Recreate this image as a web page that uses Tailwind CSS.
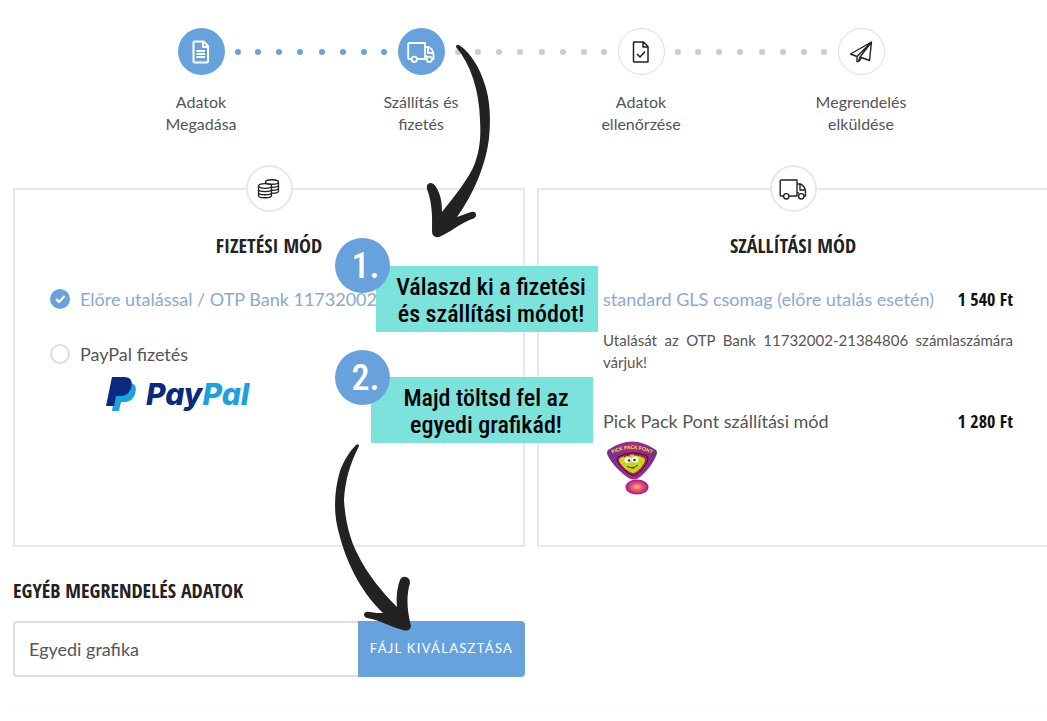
<!DOCTYPE html>
<html lang="hu">
<head>
    <meta charset="UTF-8">
    <meta name="viewport" content="width=device-width, initial-scale=1.0">
    <title>Szállítás és fizetés</title>
    <script src="https://cdn.jsdelivr.net/npm/@tailwindcss/browser@4"></script>
</head>

<body class="bg-white font-['Lato',sans-serif] text-[#555] overflow-x-hidden">

<main class="relative pl-[13px] -mr-0.5 pt-7">

    <!-- Steps -->
    <ol class="grid grid-cols-4 max-w-[880px] mx-auto text-center text-base leading-[22px]">
        <li>
            <div class="flex items-center">
                <div class="flex-1 px-[9px]"></div>
                <div class="size-[47px] rounded-full bg-[#68a2dc] text-white grid place-items-center">
                    <svg class="w-5 h-6" viewBox="0 0 20 24" fill="none" stroke="currentColor" stroke-width="2" stroke-linejoin="round"><path d="M3.500 1.500h9l4.500 4.500v15.500a1 1 0 0 1-1 1H3.500a1 1 0 0 1-1-1v-19a1 1 0 0 1 1-1zM12 2v5h5M5.500 11h8.500M5.500 14h8.500M5.500 17h8.500"/></svg>
                </div>
                <div class="flex-1 flex justify-between pl-2.5 pr-2">
                    <i class="size-1.5 rounded-full bg-[#68a2dc]"></i><i class="size-1.5 rounded-full bg-[#68a2dc]"></i><i class="size-1.5 rounded-full bg-[#68a2dc]"></i><i class="size-1.5 rounded-full bg-[#68a2dc]"></i>
                </div>
            </div>
            <p class="mt-4">Adatok<br>Megadása</p>
        </li>
        <li>
            <div class="flex items-center">
                <div class="flex-1 flex justify-between pl-2 pr-2.5">
                    <i class="size-1.5 rounded-full bg-[#68a2dc]"></i><i class="size-1.5 rounded-full bg-[#68a2dc]"></i><i class="size-1.5 rounded-full bg-[#68a2dc]"></i><i class="size-1.5 rounded-full bg-[#68a2dc]"></i>
                </div>
                <div class="size-[47px] rounded-full bg-[#68a2dc] text-white grid place-items-center">
                    <svg class="w-7 h-6" viewBox="0 0 28 24" fill="none" stroke="currentColor" stroke-width="1.8" stroke-linejoin="round"><path d="M4.500 19H2.200a1 1 0 0 1-1-1V4a1 1 0 0 1 1-1H18v16H10M18 7h3.500c2.500 1 4.500 4 5 7v5h-1.500M21 7.500V13h5M18 16h2"/><circle cx="7.300" cy="19.300" r="2.700"/><circle cx="22.300" cy="19.300" r="2.700"/></svg>
                </div>
                <div class="flex-1 flex justify-between pl-2.5 pr-2">
                    <i class="size-1.5 rounded-full bg-[#ccc]"></i><i class="size-1.5 rounded-full bg-[#ccc]"></i><i class="size-1.5 rounded-full bg-[#ccc]"></i><i class="size-1.5 rounded-full bg-[#ccc]"></i>
                </div>
            </div>
            <p class="mt-4">Szállítás és<br>fizetés</p>
        </li>
        <li>
            <div class="flex items-center">
                <div class="flex-1 flex justify-between pl-2 pr-2.5">
                    <i class="size-1.5 rounded-full bg-[#ccc]"></i><i class="size-1.5 rounded-full bg-[#ccc]"></i><i class="size-1.5 rounded-full bg-[#ccc]"></i><i class="size-1.5 rounded-full bg-[#ccc]"></i>
                </div>
                <div class="size-[47px] rounded-full border border-[#ddd] text-[#222] grid place-items-center">
                    <svg class="w-5 h-6" viewBox="0 0 20 24" fill="none" stroke="currentColor" stroke-width="1.500" stroke-linejoin="round"><path d="M3 2h9.500l4.500 4.500V22H3a.5.5 0 0 1-.5-.5v-19A.5.5 0 0 1 3 2zM12 2.500V7h4.500M6 14l3 3 5-5.500"/></svg>
                </div>
                <div class="flex-1 flex justify-between pl-2.5 pr-2">
                    <i class="size-1.5 rounded-full bg-[#ccc]"></i><i class="size-1.5 rounded-full bg-[#ccc]"></i><i class="size-1.5 rounded-full bg-[#ccc]"></i><i class="size-1.5 rounded-full bg-[#ccc]"></i>
                </div>
            </div>
            <p class="mt-4">Adatok<br>ellenőrzése</p>
        </li>
        <li>
            <div class="flex items-center">
                <div class="flex-1 flex justify-between pl-2 pr-2.5">
                    <i class="size-1.5 rounded-full bg-[#ccc]"></i><i class="size-1.5 rounded-full bg-[#ccc]"></i><i class="size-1.5 rounded-full bg-[#ccc]"></i><i class="size-1.5 rounded-full bg-[#ccc]"></i>
                </div>
                <div class="size-[47px] rounded-full border border-[#ddd] text-[#222] grid place-items-center">
                    <svg class="size-6" viewBox="0 0 24 24" fill="none" stroke="currentColor" stroke-width="1.400" stroke-linejoin="round"><path d="M22.500 2 1.500 14l6.500 2.500zM22.500 2l-2 18.500-9.500-3.500zM8 16.500v5h1.500L11 17M9.500 21.500l3-3.500"/></svg>
                </div>
                <div class="flex-1 px-[9px]"></div>
            </div>
            <p class="mt-4">Megrendelés<br>elküldése</p>
        </li>
    </ol>

    <!-- Payment and shipping -->
    <div class="grid grid-cols-2 gap-3 mt-[53px] text-lg leading-6">

        <section class="border-2 border-[#e8e8e8] px-[35px] pb-12">
            <div class="size-[47px] -mt-[25px] mx-auto rounded-full border-2 border-[#e8e8e8] bg-white text-[#222] grid place-items-center">
                <svg class="size-6" viewBox="0 0 24 24" fill="none" stroke="currentColor" stroke-width="1.300"><ellipse cx="8" cy="9" rx="6.500" ry="2.300"/><path d="M1.500 9v9.500c0 3 13 3 13 0V9M1.500 12.300c0 3 13 3 13 0M1.500 15.500c0 3 13 3 13 0M8.500 6.500V5c0-3 13-3 13 0v9c0 1.500-3 2.300-6.500 2.300M8.500 5c0 3 13 3 13 0M15 10.300c3.500 0 6.500-.8 6.500-2.300M15 13.300c3.500 0 6.500-.8 6.500-2.300"/></svg>
            </div>
            <h2 class="mt-[22px] text-center text-xl leading-6 font-bold text-[#222] font-['Open_Sans_Condensed','Noto_Sans_Condensed','Roboto_Condensed','Liberation_Sans_Narrow',sans-serif]">FIZETÉSI MÓD</h2>

            <label class="mt-[29px] flex items-center gap-2.5 text-[#8aa8d6] whitespace-nowrap">
                <span class="relative size-5 shrink-0">
                    <input type="radio" name="payment" checked class="block appearance-none size-5 rounded-full bg-[#68a2dc]">
                    <svg class="absolute inset-0 size-5 pointer-events-none" viewBox="0 0 20 20" fill="none" stroke="#fff" stroke-width="2"><path d="m6 10 3 3 5.500-6"/></svg>
                </span>
                Előre utalással / OTP Bank 11732002-
            </label>

            <label class="mt-[31px] flex items-center gap-2.5">
                <input type="radio" name="payment" class="appearance-none size-5 rounded-full border-2 border-[#ddd]">
                PayPal fizetés
            </label>
            <svg class="mt-2.5 ml-14 w-[146px] h-9" viewBox="0 0 146 36" role="img" aria-label="PayPal">
                <path d="M9 7h12c7 0 8 5 6 11s-6 8-11 8h-3l-2 9H4z" fill="#1ba0e0" transform="translate(2 0)"/>
                <path d="M6 1h12c7 0 9 4 7 11-2 6-6 8-11 8h-4l-2 10H0z" fill="#0a2a80"/>
                <text x="40" y="29" font-family="Inter" font-size="30" font-weight="800" font-style="italic" fill="#0a2a80">Pay<tspan fill="#1ba0e0">Pal</tspan></text>
            </svg>
        </section>

        <section class="border-2 border-[#e8e8e8] px-[34px] pb-[50px]">
            <div class="size-[47px] -mt-[25px] mx-auto rounded-full border-2 border-[#e8e8e8] bg-white text-[#222] grid place-items-center">
                <svg class="w-7 h-6" viewBox="0 0 28 24" fill="none" stroke="currentColor" stroke-width="1.400" stroke-linejoin="round"><path d="M4.500 19H2.200a1 1 0 0 1-1-1V4a1 1 0 0 1 1-1H18v16H10M18 7h3.500c2.500 1 4.500 4 5 7v5h-1.500M21 7.500V13h5M18 16h2"/><circle cx="7.300" cy="19.300" r="2.700"/><circle cx="22.300" cy="19.300" r="2.700"/></svg>
            </div>
            <h2 class="mt-[22px] text-center text-xl leading-6 font-bold text-[#222] font-['Open_Sans_Condensed','Noto_Sans_Condensed','Roboto_Condensed','Liberation_Sans_Narrow',sans-serif]">SZÁLLÍTÁSI MÓD</h2>

            <div class="mt-[29px] flex items-center justify-between">
                <label class="flex items-center gap-2.5 text-[#8aa8d6] whitespace-nowrap">
                    <input type="radio" name="shipping" checked class="appearance-none size-5 rounded-full bg-[#68a2dc]">
                    standard GLS csomag (előre utalás esetén)
                </label>
                <strong class="whitespace-nowrap text-[#111] font-['Open_Sans_Condensed','Noto_Sans_Condensed','Roboto_Condensed','Liberation_Sans_Narrow',sans-serif]">1 540 Ft</strong>
            </div>
            <p class="mt-[18px] ml-[30px] text-[15px] leading-[22px] text-justify">Utalását az OTP Bank 11732002-21384806 számlaszámára várjuk!</p>

            <div class="mt-9 flex items-center justify-between">
                <label class="flex items-center gap-2.5">
                    <input type="radio" name="shipping" class="appearance-none size-5 rounded-full border-2 border-[#ddd]">
                    Pick Pack Pont szállítási mód
                </label>
                <strong class="whitespace-nowrap text-[#111] font-['Open_Sans_Condensed','Noto_Sans_Condensed','Roboto_Condensed','Liberation_Sans_Narrow',sans-serif]">1 280 Ft</strong>
            </div>
            <svg class="mt-2 ml-[34px] w-[50px] h-[54px]" viewBox="0 0 50 54" role="img" aria-label="Pick Pack Pont">
                <defs>
                    <radialGradient id="dot"><stop offset="0" stop-color="#ffc070"/><stop offset=".4" stop-color="#f06070"/><stop offset="1" stop-color="#a81888"/></radialGradient>
                    <linearGradient id="shield"><stop offset="0" stop-color="#70308c"/><stop offset=".5" stop-color="#a52b8c"/><stop offset="1" stop-color="#70308c"/></linearGradient>
                    <path id="arc" d="M3 14Q25 2 47 14"/>
                </defs>
                <path d="M1 9Q25-8 49 9q2 2 0 6c-4 9-9 15-16 21q-6 5-13 0C12 30 5 23 1 15q-2-4 0-6z" fill="url(#shield)"/>
                <path d="M11 16Q25 8 40 15q2 2 0 6c-3 6-6 9-10 12q-4 3-7 0c-5-3-9-7-12-12q-2-3 0-5z" fill="#c2185b" stroke="#301030"/>
                <path d="M13 17q12-7 24 0 2 2 0 5c-2 4-5 7-8 9q-3 2-6 0c-4-2-7-5-10-9q-2-3 0-5z" fill="#c4d91c"/>
                <ellipse cx="21" cy="19" rx="3.500" ry="3" fill="#fff"/><ellipse cx="28" cy="18.500" rx="3.500" ry="3" fill="#fff"/>
                <circle cx="22" cy="19.500" r="1.300" fill="#234"/><circle cx="27.500" cy="19" r="1.300" fill="#234"/>
                <path d="M17 16q3-3 6-1M27 14q4-1 5 1M20 25q5 4 11-1" fill="none" stroke="#333"/>
                <path d="M24 27q3 2 4-1z" fill="#c22"/>
                <text font-family="Lato" font-size="5" font-weight="900" fill="#ffd93b" text-anchor="middle"><textPath href="#arc" startOffset="50%">PICK PACK PONT</textPath></text>
                <ellipse cx="30" cy="46" rx="11.500" ry="7.500" fill="url(#dot)"/>
            </svg>
        </section>
    </div>

    <!-- Custom artwork upload -->
    <section class="mt-8 w-1/2 pr-1.5">
        <h2 class="text-xl leading-6 font-bold text-[#222] font-['Open_Sans_Condensed','Noto_Sans_Condensed','Roboto_Condensed','Liberation_Sans_Narrow',sans-serif]">EGYÉB MEGRENDELÉS ADATOK</h2>
        <div class="mt-[18px] flex h-14">
            <input type="text" value="Egyedi grafika" aria-label="Egyedi grafika" class="flex-1 min-w-0 border-2 border-r-0 border-[#ddd] rounded-l px-3.5 text-lg">
            <button type="button" class="w-[167px] shrink-0 bg-[#68a2dc] text-white text-[13px] tracking-widest rounded-r">FÁJL KIVÁLASZTÁSA</button>
        </div>
    </section>
    <hr class="mt-[31px] border-[#f8f8f8]">

    <!-- Hint notes and arrows laid over the form -->
    <div class="absolute left-[376px] top-[266px] w-[222px] pt-2 pb-1 pl-2 bg-[#7be2dc] text-black text-center text-2xl leading-[27px] font-medium font-['Roboto_Condensed','Roboto',sans-serif]">Válaszd ki a fizetési<br>és szállítási módot!</div>
    <div class="absolute left-[335px] top-[238px] size-[55px] rounded-full bg-[#68a2dc] text-white grid place-items-center pl-1.5 text-4xl font-medium font-['Roboto_Condensed','Roboto',sans-serif]">1.</div>
    <div class="absolute left-[371px] top-[377px] w-[222px] pt-2 pb-1 pl-2 bg-[#7be2dc] text-black text-center text-2xl leading-[27px] font-medium font-['Roboto_Condensed','Roboto',sans-serif]">Majd töltsd fel az<br>egyedi grafikád!</div>
    <div class="absolute left-[335px] top-[350px] size-[55px] rounded-full bg-[#68a2dc] text-white grid place-items-center pl-1.5 text-4xl font-medium font-['Roboto_Condensed','Roboto',sans-serif]">2.</div>

    <svg class="absolute left-[420px] top-10 w-20 h-50 pointer-events-none" viewBox="420 40 80 200" fill="#222220">
        <path d="M456 47Q456 44 459 45C471 53 480 68 485 85C490 100 491 120 489 138C486 165 473 195 457 217L471 212Q476 211 476 215Q476 218 472 219C459 224 451 232 439 237Q432 238 432 231C432 220 433 205 427 189Q426 184 430 183Q434 183 436 187C441 195 442 203 442 212C453 198 469 179 475 163C480 149 481 136 480 120C479 90 471 65 456 47Z"/>
    </svg>
    <svg class="absolute left-[330px] top-[440px] w-[90px] h-50 pointer-events-none" viewBox="330 440 90 200" fill="#222220">
        <path d="M356 445Q359 443 359 446C350 464 345 480 344 500C345 518 349 537 357 553C367 574 382 592 397 607C396 597 397 588 400 580Q402 576 406 577Q410 578 410 583C406 596 407 611 411 626Q410 632 403 630C391 627 380 620 367 618Q364 617 364 614Q365 611 370 612C375 613 379 613 383 613C359 590 344 558 337 525C334 510 334 491 340 471C344 460 350 451 356 445Z"/>
    </svg>
</main>

</body>
</html>
